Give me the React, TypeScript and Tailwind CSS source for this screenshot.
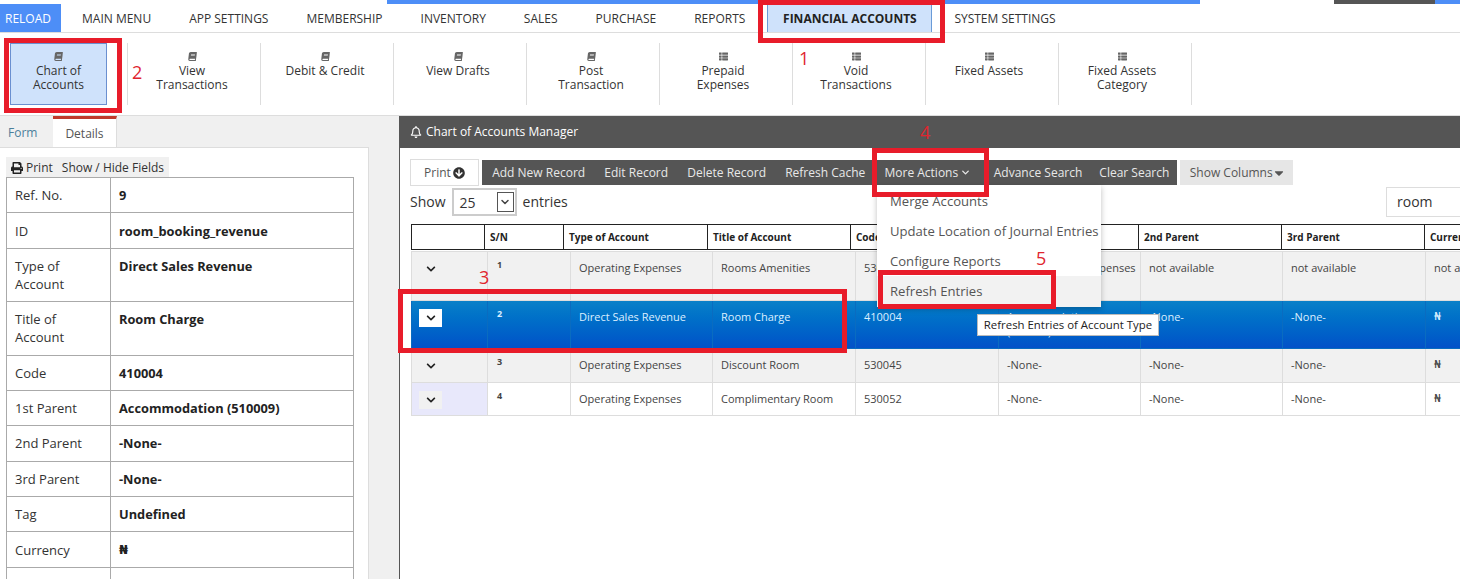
import { FaBook, FaChevronDown, FaPrint, FaArrowCircleDown, FaCaretDown, FaRegBell, FaThList } from "react-icons/fa";
import { LuChevronDown } from "react-icons/lu";

const menu = ["MAIN MENU", "APP SETTINGS", "MEMBERSHIP", "INVENTORY", "SALES", "PURCHASE", "REPORTS"];

const ribbon = [
  { label: ["View", "Transactions"], book: true },
  { label: ["Debit & Credit"], book: true },
  { label: ["View Drafts"], book: true },
  { label: ["Post", "Transaction"], book: true },
  { label: ["Prepaid", "Expenses"], book: false },
  { label: ["Void", "Transactions"], book: false },
  { label: ["Fixed Assets"], book: false },
  { label: ["Fixed Assets", "Category"], book: false },
];

const details = [
  ["Ref. No.", "9"],
  ["ID", "room_booking_revenue"],
  ["Type of Account", "Direct Sales Revenue"],
  ["Title of Account", "Room Charge"],
  ["Code", "410004"],
  ["1st Parent", "Accommodation (510009)"],
  ["2nd Parent", "-None-"],
  ["3rd Parent", "-None-"],
  ["Tag", "Undefined"],
  ["Currency", "₦"],
  ["", ""],
];

const headWidths = [73, 79, 144, 143, 145, 143, 143, 143, 143];
const headCols = ["", "S/N", "Type of Account", "Title of Account", "Code", "1st Parent", "2nd Parent", "3rd Parent", "Currency"];
const bodyWidths = [76, 83, 142, 143, 143, 142, 142, 143, 143];

const rows = [
  { sn: "1", type: "Operating Expenses", title: "Rooms Amenities", code: "530031", p1: "Misc Operating Expenses", p2: "not available", p3: "not available", cur: "not available", tone: "h-[49px] bg-[#f1f1f1] text-[#444]", first: "", line: "border-[#ddd]", pad: "pt-[8px]" },
  { sn: "2", type: "Direct Sales Revenue", title: "Room Charge", code: "410004", p1: "Accommodation (510009)", p2: "-None-", p3: "-None-", cur: "₦", tone: "h-[48px] bg-gradient-to-b from-[#0a80c8] to-[#0450c8] text-[#dcefff]", first: "", line: "border-[#0a6cc0]", pad: "pt-[8px]" },
  { sn: "3", type: "Operating Expenses", title: "Discount Room", code: "530045", p1: "-None-", p2: "-None-", p3: "-None-", cur: "₦", tone: "h-[33.5px] bg-[#f1f1f1] text-[#444]", first: "", line: "border-[#ddd]", pad: "pt-[8px]" },
  { sn: "4", type: "Operating Expenses", title: "Complimentary Room", code: "530052", p1: "-None-", p2: "-None-", p3: "-None-", cur: "₦", tone: "h-[33.5px] bg-white text-[#444]", first: "bg-[#e8e8fb]", line: "border-[#ddd]", pad: "pt-[8px]" },
];

const toolbar = ["Add New Record", "Edit Record", "Delete Record", "Refresh Cache"];

const RedBox = ({ className }: { className: string }) => (
  <div className={`absolute border-[5px] border-[#e81c2a] pointer-events-none z-20 ${className}`} />
);

const Note = ({ className, children }: { className: string; children: string }) => (
  <span className={`absolute z-20 text-[18px] leading-none text-[#e0252f] ${className}`}>{children}</span>
);

export default function App() {
  return (
    <div className="relative h-[579px] w-[1460px] overflow-hidden bg-white font-['Open_Sans','DejaVu_Sans',sans-serif] text-[#333]">
      {/* top strip */}
      <div className="flex h-1">
        <div className="w-[387px]" />
        <div className="w-[813px] bg-[#4d8ef7]" />
        <div className="w-[134px]" />
        <div className="w-[101px] bg-[#555]" />
        <div className="w-[25px] bg-[#4d8ef7]" />
      </div>

      {/* main menu */}
      <div className="flex h-[29px] items-center border-b border-[#ddd] text-[12px]">
        <div className="flex h-full w-[61px] items-center bg-[#4d8ef7] pl-[5px] pt-[1px] text-white">RELOAD</div>
        <div className="ml-[21px] flex gap-[38px] pt-[1px]">
          {menu.map((m) => (
            <span key={m}>{m}</span>
          ))}
        </div>
        <div className="ml-[22px] flex h-full w-[165px] items-center justify-center border-x border-[#6a9bd8] bg-[#cfe2fb] pt-[1px] font-bold text-[#222]">
          FINANCIAL ACCOUNTS
        </div>
        <span className="ml-[22px] pt-[1px]">SYSTEM SETTINGS</span>
      </div>

      {/* ribbon */}
      <div className="flex h-[83px] border-b border-[#ddd] pt-[10px] text-[12px] leading-[14px]">
        <div className="h-[62px] w-[128px] border-r border-[#ddd] pl-[10px]">
          <div className="flex h-[62px] w-[97px] flex-col items-center border border-[#6a8fd0] bg-[#cfe2fb] pt-[8px] text-center">
            <FaBook className="mb-[3px] h-[9px] w-[9px] -skew-x-6 text-[#666]" />
            <span>Chart of</span>
            <span>Accounts</span>
          </div>
        </div>
        {ribbon.map((r) => (
          <div
            key={r.label[0] + r.label.length}
            className={`flex h-[62px] w-[133px] flex-col items-center border-r border-[#ddd] pt-[9px] text-center ${r.book ? "pr-[4px]" : "pr-[6px]"}`}
          >
            {r.book ? (
              <FaBook className="mb-[3px] h-[9px] w-[9px] -skew-x-6 text-[#666]" />
            ) : (
              <FaThList className="mb-[3px] h-[9px] w-[11px] text-[#666]" />
            )}
            {r.label.map((l) => (
              <span key={l}>{l}</span>
            ))}
          </div>
        ))}
      </div>

      <div className="flex h-[463px]">
        {/* left panel */}
        <div className="w-[399px] shrink-0 bg-[#f0f0f0] text-[13px]">
          <div className="flex h-[31px] text-[12px]">
            <div className="flex w-[53px] items-center pl-2 pt-[2px] text-[#4b7f9b]">Form</div>
            <div className="flex w-[64px] items-center justify-center border-t-[3px] border-r border-t-[#c0392b] border-r-[#ddd] bg-white pt-[1px] text-[#555]">
              Details
            </div>
          </div>
          <div className="h-[432px] w-[369px] border-t border-r border-[#ddd] bg-white pt-[9px]">
            <div className="ml-[6px] flex h-[20px] w-[163px] items-center gap-[9px] bg-[#f0f0f0] pl-[5px] pt-[1px] text-[12px]">
              <span className="flex items-center gap-[3px]">
                <FaPrint className="h-[12px] w-[12px] text-[#222]" />
                Print
              </span>
              <span>Show / Hide Fields</span>
            </div>
            <table className="ml-[6px] w-[348px] table-fixed border-collapse leading-[18px]">
              <colgroup>
                <col className="w-[104px]" />
                <col />
              </colgroup>
              <tbody>
                {details.map(([k, v], i) => (
                  <tr key={k + i}>
                    <td className="border border-[#aaa] px-2 py-[8.2px] align-top text-[#333]">{k || "\u00a0"}</td>
                    <td className={`border border-[#aaa] px-2 py-[8.2px] align-top font-bold text-[#222] ${v === "₦" ? "font-['DejaVu_Sans']" : "text-[12.8px]"}`}>{v}</td>
                  </tr>
                ))}
              </tbody>
            </table>
          </div>
        </div>

        {/* right panel */}
        <div className="relative min-w-0 flex-1 border-l border-[#555] bg-white">
          <div className="flex h-[32px] items-center gap-[4px] bg-[#555] pl-[10px] text-[12px] text-white">
            <FaRegBell className="h-[12px] w-[12px]" />
            Chart of Accounts Manager
          </div>

          {/* toolbar */}
          <div className="ml-[10px] mt-[11px] flex h-[27px] items-center text-[12px]">
            <div className="flex h-[27px] w-[69px] items-center justify-center gap-[2px] border border-[#ddd] text-[#555]">
              Print
              <FaArrowCircleDown className="h-[12px] w-[12px] text-[#333]" />
            </div>
            <div className="ml-[3px] flex h-[25px] items-center bg-[#555] pl-[0.6px] text-[#e8e8e8]">
              {toolbar.map((t) => (
                <span key={t} className="px-[9.6px]">
                  {t}
                </span>
              ))}
              <span className="flex items-center gap-[2px] px-[9.6px]">
                More Actions
                <LuChevronDown className="h-[11px] w-[11px]" strokeWidth={3} />
              </span>
              <span className="pl-[13px] pr-[8px]">Advance Search</span>
              <span className="pl-[9px] pr-[7.4px]">Clear Search</span>
            </div>
            <div className="ml-[3px] flex h-[25px] w-[113px] items-center bg-[#e6e6e6] pl-[10px] text-[#555]">
              Show Columns
              <FaCaretDown className="h-[14px] w-[12px]" />
            </div>
          </div>

          {/* length and search */}
          <div className="ml-[10px] flex h-[38px] items-start text-[14px] text-[#333]">
            <span className="mt-[2px] leading-[28px]">Show</span>
            <div className="ml-[6px] mt-[2px] flex h-[28px] w-[65px] items-center border-2 border-[#ccc] pl-[6px] pr-[1px]">
              <span className="flex-1">25</span>
              <span className="flex h-[20px] w-[17px] items-center justify-center border border-[#555]">
                <LuChevronDown className="h-[12px] w-[12px] text-[#444]" strokeWidth={3} />
              </span>
            </div>
            <span className="ml-[6px] mt-[2px] leading-[28px]">entries</span>
            <div className="ml-auto mt-[1px] flex h-[30px] w-[74px] items-center border border-r-0 border-[#ddd] pl-[10px] pb-[2px]">room</div>
          </div>

          {/* table head */}
          <div className="ml-[11px] overflow-hidden">
            <table className="w-[1156px] table-fixed border-collapse text-[10px]">
              <colgroup>
                {headWidths.map((w, i) => (
                  <col key={i} style={{ width: w }} />
                ))}
              </colgroup>
              <thead>
                <tr className="h-[25px]">
                  {headCols.map((c, i) => (
                    <th key={i} className="whitespace-nowrap border border-[#222] pl-[5px] text-left font-bold text-[#222]">
                      {c}
                    </th>
                  ))}
                </tr>
              </thead>
            </table>
            {/* table body */}
            <table className="mt-[1px] w-[1157px] table-fixed border-collapse text-[11px] leading-[15px]">
              <colgroup>
                {bodyWidths.map((w, i) => (
                  <col key={i} style={{ width: w }} />
                ))}
              </colgroup>
              <tbody>
                {rows.map((r) => (
                  <tr key={r.sn} className={r.tone}>
                    <td className={`border pl-[7px] align-top ${r.pad} ${r.line} ${r.first}`}>
                      <span className={`flex h-[18px] w-[23px] items-center justify-center ${r.sn === "2" ? "bg-white" : r.sn === "4" ? "bg-[#f1f1f1]" : ""}`}>
                        <FaChevronDown className="h-[10px] w-[10px] text-[#222]" />
                      </span>
                    </td>
                    <td className={`border px-[9px] pt-[5px] align-top text-[9px] font-bold ${r.line}`}>{r.sn}</td>
                    <td className={`border px-[8px] align-top ${r.pad} ${r.line}`}>{r.type}</td>
                    <td className={`border px-[8px] align-top ${r.pad} ${r.line}`}>{r.title}</td>
                    <td className={`border px-[8px] align-top ${r.pad} ${r.line}`}>{r.code}</td>
                    <td className={`border px-[8px] align-top ${r.pad} ${r.line} ${r.sn === "1" ? "whitespace-nowrap" : ""}`}>{r.p1}</td>
                    <td className={`border px-[8px] align-top ${r.pad} ${r.line}`}>{r.p2}</td>
                    <td className={`border px-[8px] align-top ${r.pad} ${r.line}`}>{r.p3}</td>
                    <td className={`border px-[8px] align-top ${r.pad} ${r.line} ${r.cur === "₦" ? "font-['DejaVu_Sans']" : ""}`}>{r.cur}</td>
                  </tr>
                ))}
              </tbody>
            </table>
          </div>

          {/* dropdown */}
          <div className="absolute left-[477px] top-[69px] z-10 w-[224px] bg-white pt-[1px] text-[13.1px] leading-[30px] text-[#555] shadow-[0_2px_6px_rgba(0,0,0,0.25)]">
            <div className="h-[30px] pl-[13px]">Merge Accounts</div>
            <div className="h-[30px] whitespace-nowrap pl-[13px]">Update Location of Journal Entries</div>
            <div className="h-[30px] pl-[13px]">Configure Reports</div>
            <div className="h-[31px] bg-[#f2f2f2] pl-[13px]">Refresh Entries</div>
          </div>

          {/* tooltip */}
          <div className="absolute left-[577px] top-[198px] z-10 flex h-[22px] w-[182px] items-center justify-center border border-[#bbb] bg-white text-[11.4px] text-[#222]">
            Refresh Entries of Account Type
          </div>
        </div>
      </div>

      {/* tutorial marks */}
      <RedBox className="left-[758px] top-0 h-[43px] w-[187px]" />
      <RedBox className="left-[4px] top-[38px] h-[75px] w-[118px]" />
      <RedBox className="left-[398px] top-[289px] h-[64px] w-[449px]" />
      <RedBox className="left-[872px] top-[148px] h-[49px] w-[117px]" />
      <RedBox className="left-[878px] top-[270px] h-[39px] w-[178px]" />
      <Note className="left-[799px] top-[49px]">1</Note>
      <Note className="left-[132px] top-[63px]">2</Note>
      <Note className="left-[479px] top-[268px]">3</Note>
      <Note className="left-[920px] top-[123px]">4</Note>
      <Note className="left-[1036px] top-[249px]">5</Note>
    </div>
  );
}
